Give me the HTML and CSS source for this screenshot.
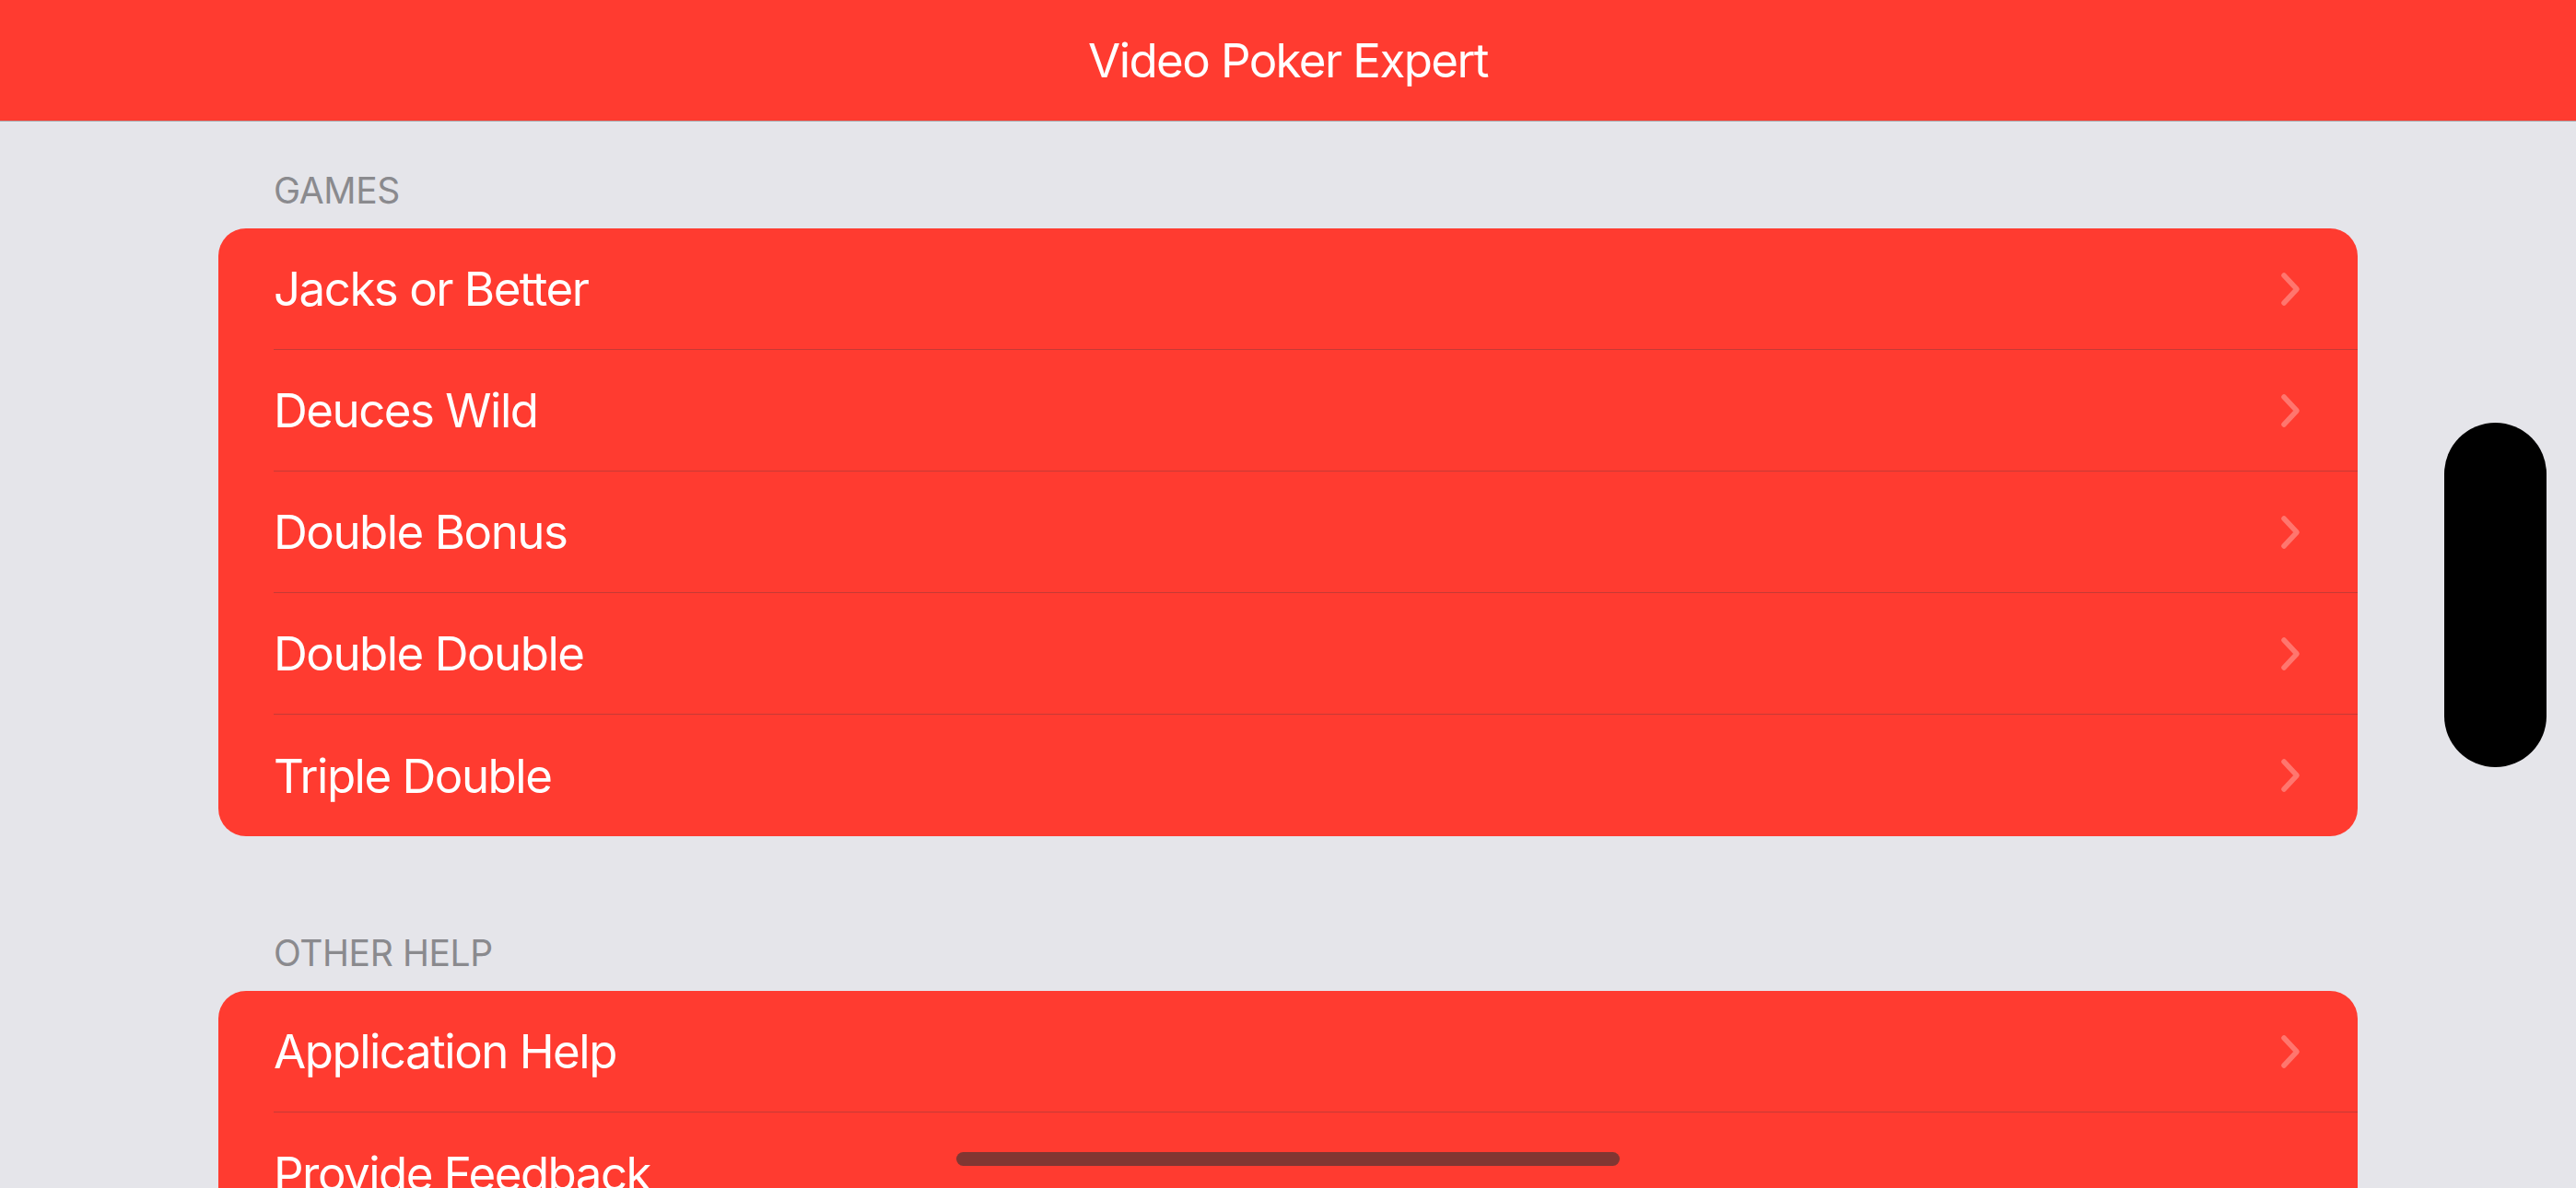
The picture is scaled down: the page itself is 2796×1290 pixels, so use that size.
FILE: index.html
```html
<!DOCTYPE html>
<html lang="en">
<head>
<meta charset="utf-8">
<title>Video Poker Expert</title>
<link rel="stylesheet" href="styles.css">
</head>
<body>
<div class="screen">
  <header class="navbar">
    <h1 class="nav-title">Video Poker Expert</h1>
  </header>
  <main class="content">
    <section class="section">
      <h2 class="section-header">GAMES</h2>
      <ul class="card">
        <li class="row"><div class="row-inner"><span class="row-label">Jacks or Better</span><svg class="chevron" viewBox="0 0 22 38"><polyline points="4,4 18,19 4,34"/></svg></div></li>
        <li class="row"><div class="row-inner"><span class="row-label">Deuces Wild</span><svg class="chevron" viewBox="0 0 22 38"><polyline points="4,4 18,19 4,34"/></svg></div></li>
        <li class="row"><div class="row-inner"><span class="row-label">Double Bonus</span><svg class="chevron" viewBox="0 0 22 38"><polyline points="4,4 18,19 4,34"/></svg></div></li>
        <li class="row"><div class="row-inner"><span class="row-label">Double Double</span><svg class="chevron" viewBox="0 0 22 38"><polyline points="4,4 18,19 4,34"/></svg></div></li>
        <li class="row"><div class="row-inner"><span class="row-label">Triple Double</span><svg class="chevron" viewBox="0 0 22 38"><polyline points="4,4 18,19 4,34"/></svg></div></li>
      </ul>
    </section>
    <section class="section section-second">
      <h2 class="section-header">OTHER HELP</h2>
      <ul class="card">
        <li class="row"><div class="row-inner"><span class="row-label">Application Help</span><svg class="chevron" viewBox="0 0 22 38"><polyline points="4,4 18,19 4,34"/></svg></div></li>
        <li class="row"><div class="row-inner"><span class="row-label">Provide Feedback</span></div></li>
      </ul>
    </section>
  </main>
  <div class="island"></div>
  <div class="home-indicator"></div>
</div>
</body>
</html>
```
FILE: styles.css
```css
html, body {
  margin: 0;
  padding: 0;
}
body {
  background: #e5e5ea;
  font-family: Inter, "Liberation Sans", sans-serif;
}
.screen {
  position: relative;
  width: 2796px;
  height: 1290px;
  overflow: hidden;
  background: #e5e5ea;
}
.navbar {
  height: 131px;
  background: #ff3b30;
  border-bottom: 1px solid #a9a9ad;
  display: flex;
  align-items: center;
  justify-content: center;
}
.nav-title {
  margin: 0;
  font-size: 51px;
  font-weight: 400;
  color: #ffffff;
  letter-spacing: -1.6px;
}
.content {
  padding: 0 237px;
}
.section-header {
  margin: 51px 0 17px 60px;
  font-size: 39px;
  line-height: 48px;
  font-weight: 400;
  color: #8a8a8e;
  letter-spacing: -0.4px;
}
.section-second .section-header {
  margin-top: 103px;
}
.card {
  list-style: none;
  margin: 0;
  padding: 0;
  background: #ff3b30;
  border-radius: 30px;
  overflow: hidden;
}
.row {
  padding-left: 60px;
}
.row-inner {
  height: 131px;
  border-bottom: 1px solid rgba(60, 60, 67, 0.29);
  display: flex;
  align-items: center;
  justify-content: space-between;
  padding-right: 62px;
}
.row:last-child .row-inner {
  height: 132px;
  border-bottom: none;
}
.row-label {
  font-size: 51px;
  color: #ffffff;
  letter-spacing: -1.5px;
}
.chevron {
  width: 22px;
  height: 38px;
  fill: none;
  stroke: rgba(255, 255, 255, 0.3);
  stroke-width: 5.5;
  stroke-linecap: round;
  stroke-linejoin: round;
}
.island {
  position: absolute;
  left: 2653px;
  top: 459px;
  width: 111px;
  height: 374px;
  border-radius: 56px;
  background: #000000;
}
.home-indicator {
  position: absolute;
  left: 1038px;
  top: 1251px;
  width: 720px;
  height: 15px;
  border-radius: 8px;
  background: rgba(52, 52, 52, 0.62);
}
```
